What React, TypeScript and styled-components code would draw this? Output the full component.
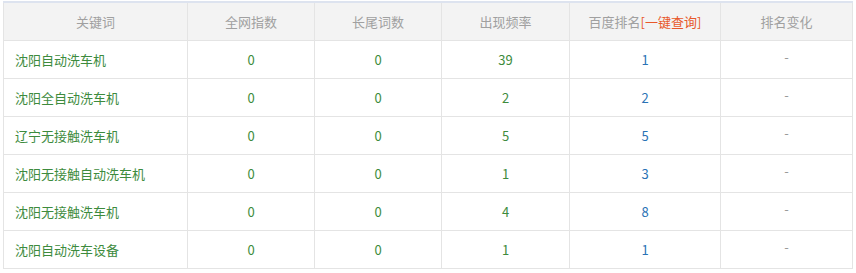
import React from "react";
import styled, { createGlobalStyle } from "styled-components";

const Global = createGlobalStyle`
  html, body { margin: 0; padding: 0; background: #fff; }
  body { font-family: "Microsoft YaHei", "Noto Sans CJK SC", "Noto Sans", sans-serif; }
`;

const Wrap = styled.div`
  padding: 1px 3px 0 3px;
  width: 850px;
`;

const Table = styled.table`
  width: 100%;
  border-collapse: collapse;
  table-layout: fixed;
  font-size: 13px;
  border-top: 2px solid #dde3ef;
`;

const Th = styled.th<{ $w?: number }>`
  ${(p) => (p.$w ? `width: ${p.$w}px;` : "")}
  height: 36px;
  padding: 0 0 1px 0;
  background: #f3f3f3;
  color: #a0a0a0;
  font-weight: normal;
  text-align: center;
  border: 1px solid #e4e4e4;
  border-top: none;
`;

const Td = styled.td<{ $color?: string; $left?: boolean }>`
  height: 36px;
  padding: 0 0 1px ${(p) => (p.$left ? "11px" : "0")};
  text-align: ${(p) => (p.$left ? "left" : "center")};
  color: ${(p) => p.$color || "#3d8b3d"};
  border: 1px solid #e4e4e4;
`;

const Query = styled.span`
  color: #e8582a;
`;

const Dash = styled.span`
  display: inline-block;
  position: relative;
  top: -3px;
  color: #999;
`;

const rows = [
  ["沈阳自动洗车机", "0", "0", "39", "1"],
  ["沈阳全自动洗车机", "0", "0", "2", "2"],
  ["辽宁无接触洗车机", "0", "0", "5", "5"],
  ["沈阳无接触自动洗车机", "0", "0", "1", "3"],
  ["沈阳无接触洗车机", "0", "0", "4", "8"],
  ["沈阳自动洗车设备", "0", "0", "1", "1"],
];

export default function App() {
  return (
    <>
      <Global />
      <Wrap>
        <Table>
          <thead>
            <tr>
              <Th $w={183}>关键词</Th>
              <Th $w={126}>全网指数</Th>
              <Th $w={126}>长尾词数</Th>
              <Th $w={127}>出现频率</Th>
              <Th $w={150}>
                百度排名<Query>[一键查询]</Query>
              </Th>
              <Th>排名变化</Th>
            </tr>
          </thead>
          <tbody>
            {rows.map((r) => (
              <tr key={r[0]}>
                <Td $left>{r[0]}</Td>
                <Td>{r[1]}</Td>
                <Td>{r[2]}</Td>
                <Td>{r[3]}</Td>
                <Td $color="#2a72b5">{r[4]}</Td>
                <Td>
                  <Dash>-</Dash>
                </Td>
              </tr>
            ))}
          </tbody>
        </Table>
      </Wrap>
    </>
  );
}
